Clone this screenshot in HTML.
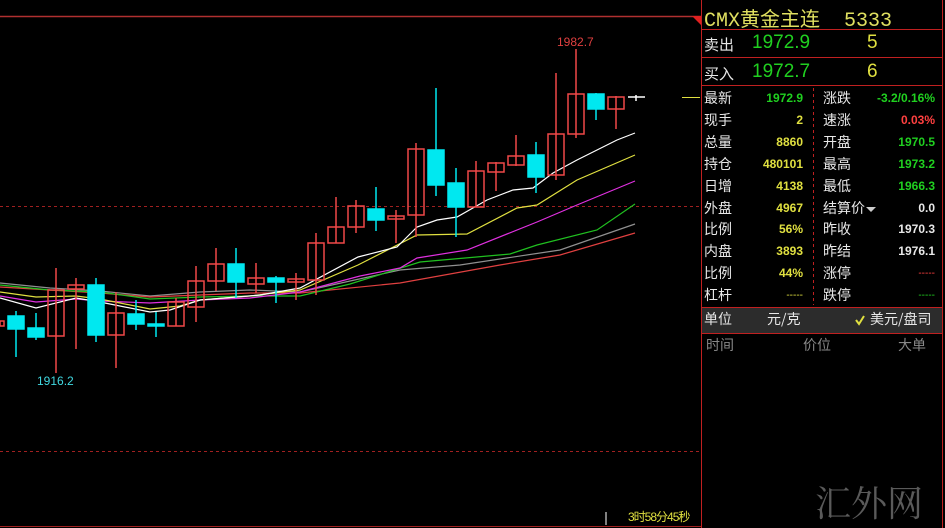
<!DOCTYPE html>
<html><head><meta charset="utf-8"><style>
body{margin:0;background:#000;width:945px;height:528px;overflow:hidden;position:relative;font-family:"Liberation Sans","Noto Sans CJK SC",sans-serif}
.a{position:absolute;white-space:nowrap}
.l{color:#e8e8e8;font-size:14px;font-family:"Noto Sans CJK SC",sans-serif;line-height:21.9px}
.n{font-weight:bold;font-size:12px;text-align:right;line-height:21.9px}
.y{color:#e0e040}.g{color:#20d020}.r{color:#ff4040}.w{color:#e8e8e8}
</style></head><body>
<svg class="a" style="left:0;top:0" width="945" height="528">
<line x1="0" y1="16.5" x2="701" y2="16.5" stroke="#b03030" stroke-width="1.5"/>
<polygon points="692,16 701,16 701,25" fill="#e02020"/>
<line x1="0" y1="206.5" x2="700" y2="206.5" stroke="#a02020" stroke-dasharray="3,3"/>
<line x1="0" y1="451.5" x2="700" y2="451.5" stroke="#a02020" stroke-dasharray="3,3"/>
<line x1="701.5" y1="0" x2="701.5" y2="528" stroke="#c02020"/>
<line x1="942.5" y1="0" x2="942.5" y2="528" stroke="#c02020"/>
<line x1="0" y1="526.5" x2="701" y2="526.5" stroke="#a02020"/>
<line x1="701" y1="29.5" x2="942" y2="29.5" stroke="#c02020"/>
<line x1="701" y1="57.5" x2="942" y2="57.5" stroke="#c02020"/>
<line x1="701" y1="85.5" x2="942" y2="85.5" stroke="#c02020"/>
<line x1="813.5" y1="88" x2="813.5" y2="305" stroke="#c02020" stroke-dasharray="3,3"/>
<rect x="702" y="307" width="240" height="26" fill="#2c2c2c"/>
<line x1="701" y1="307.5" x2="942" y2="307.5" stroke="#c02020"/>
<line x1="701" y1="333.5" x2="942" y2="333.5" stroke="#c02020"/>
<line x1="682" y1="97.5" x2="700" y2="97.5" stroke="#e0e040"/>
<g fill="none" stroke-width="1.2">
<polyline stroke="#909090" points="0,283 50,288 100,291 150,296 200,292 250,290 300,292 400,270 460,265 560,250 635,224"/>
<polyline stroke="#e04040" points="0,287 50,290 100,293 150,297 200,295 250,293 300,293 400,283 500,265 560,255 635,233"/>
<polyline stroke="#20c020" points="0,285 50,290 100,292 150,299 200,297 250,296 300,296 350,284 420,262 510,254 537,245 597,230 635,204"/>
<polyline stroke="#e030e0" points="0,296 36,302 76,299 100,301 150,303 200,300 250,298 300,292 360,276 400,268 417,258 467,250 537,222 577,205 635,181"/>
<polyline stroke="#e0e040" points="0,292 36,297 76,296 100,299 150,309 180,306 200,300 250,296 300,290 358,265 417,235 467,234 517,208 537,205 577,180 635,155"/>
<polyline stroke="#ffffff" points="0,298 36,308 76,298 100,302 150,312 170,310 200,300 260,295 300,288 358,257 397,247 417,227 437,220 457,217 487,200 513,190 533,188 553,173 577,160 617,140 635,133"/>
</g>
<g stroke-width="1.5">
<g stroke="#f04848" fill="none">
<line x1="56" y1="268" x2="56" y2="373"/><rect x="48" y="290" width="16" height="46"/>
<line x1="76" y1="278" x2="76" y2="349"/><rect x="68" y="285" width="16" height="4"/>
<line x1="116" y1="292" x2="116" y2="368"/><rect x="108" y="313" width="16" height="22"/>
<line x1="176" y1="298" x2="176" y2="326"/><rect x="168" y="302" width="16" height="24"/>
<line x1="196" y1="266" x2="196" y2="322"/><rect x="188" y="281" width="16" height="26"/>
<line x1="216" y1="248" x2="216" y2="291"/><rect x="208" y="264" width="16" height="17"/>
<line x1="256" y1="263" x2="256" y2="293"/><rect x="248" y="278" width="16" height="6"/>
<line x1="296" y1="273" x2="296" y2="300"/><rect x="288" y="279" width="16" height="3"/>
<line x1="316" y1="233" x2="316" y2="295"/><rect x="308" y="243" width="16" height="37"/>
<line x1="336" y1="197" x2="336" y2="243"/><rect x="328" y="227" width="16" height="16"/>
<line x1="356" y1="200" x2="356" y2="233"/><rect x="348" y="206" width="16" height="21"/>
<line x1="396" y1="210" x2="396" y2="243"/><rect x="388" y="216" width="16" height="3"/>
<line x1="416" y1="143" x2="416" y2="237"/><rect x="408" y="149" width="16" height="66"/>
<line x1="476" y1="161" x2="476" y2="207"/><rect x="468" y="171" width="16" height="36"/>
<line x1="496" y1="162" x2="496" y2="191"/><rect x="488" y="163" width="16" height="9"/>
<line x1="516" y1="135" x2="516" y2="166"/><rect x="508" y="156" width="16" height="9"/>
<line x1="556" y1="73" x2="556" y2="180"/><rect x="548" y="134" width="16" height="41"/>
<line x1="576" y1="49" x2="576" y2="138"/><rect x="568" y="94" width="16" height="40"/>
<line x1="616" y1="96" x2="616" y2="129"/><rect x="608" y="97" width="16" height="12"/>
<rect x="0" y="321" width="4" height="5"/>
</g>
<g stroke="#00e8f0" fill="#00e8f0">
<line x1="16" y1="311" x2="16" y2="357"/><rect x="8" y="316" width="16" height="13"/>
<line x1="36" y1="313" x2="36" y2="340"/><rect x="28" y="328" width="16" height="9"/>
<line x1="96" y1="278" x2="96" y2="342"/><rect x="88" y="285" width="16" height="50"/>
<line x1="136" y1="300" x2="136" y2="330"/><rect x="128" y="314" width="16" height="10"/>
<line x1="156" y1="312" x2="156" y2="337"/><rect x="148" y="324" width="16" height="2"/>
<line x1="236" y1="248" x2="236" y2="298"/><rect x="228" y="264" width="16" height="18"/>
<line x1="276" y1="276" x2="276" y2="303"/><rect x="268" y="278" width="16" height="4"/>
<line x1="376" y1="187" x2="376" y2="231"/><rect x="368" y="209" width="16" height="11"/>
<line x1="436" y1="88" x2="436" y2="196"/><rect x="428" y="150" width="16" height="35"/>
<line x1="456" y1="168" x2="456" y2="237"/><rect x="448" y="183" width="16" height="24"/>
<line x1="536" y1="142" x2="536" y2="193"/><rect x="528" y="155" width="16" height="22"/>
<line x1="596" y1="93" x2="596" y2="120"/><rect x="588" y="94" width="16" height="15"/>
</g>
<g stroke="#fff"><line x1="628" y1="97" x2="645" y2="97"/><line x1="636" y1="95" x2="636" y2="101"/><line x1="606" y1="512" x2="606" y2="525" stroke-width="1"/></g>
</g>
<text x="557" y="46" fill="#e04040" font-size="12" font-family="Liberation Sans">1982.7</text>
<text x="37" y="385" fill="#40d8e0" font-size="12" font-family="Liberation Sans">1916.2</text>
<polyline points="856,320 859,324 864,316" fill="none" stroke="#e0e040" stroke-width="2"/>
<polygon points="866,207 876,207 871,212" fill="#ccc"/>
</svg>
<div class="a" style="left:704px;top:3px;font-size:20px;color:#e0e060;font-family:'Liberation Mono','Noto Sans CJK SC',monospace">CMX黄金主连&nbsp;&nbsp;5333</div>
<div class="a l" style="left:704px;top:34px;font-size:15px">卖出</div>
<div class="a g" style="left:752px;top:32px;font-size:19px">1972.9</div>
<div class="a y" style="left:867px;top:32px;font-size:19px">5</div>
<div class="a l" style="left:704px;top:63px;font-size:15px">买入</div>
<div class="a g" style="left:752px;top:61px;font-size:19px">1972.7</div>
<div class="a y" style="left:867px;top:61px;font-size:19px">6</div>

<div class="a l" style="left:704px;top:88px">最新<br>现手<br>总量<br>持仓<br>日增<br>外盘<br>比例<br>内盘<br>比例<br>杠杆</div>
<div class="a l" style="left:823px;top:88px">涨跌<br>速涨<br>开盘<br>最高<br>最低<br>结算价<br>昨收<br>昨结<br>涨停<br>跌停</div>
<div class="a n" style="right:142px;top:88px;width:80px">
<div class="g">1972.9</div><div class="y">2</div><div class="y">8860</div><div class="y">480101</div><div class="y">4138</div><div class="y">4967</div><div class="y">56%</div><div class="y">3893</div><div class="y">44%</div><div class="y" style="font-weight:normal;font-size:10px">-----</div></div>
<div class="a n" style="right:10px;top:88px;width:100px">
<div class="g">-3.2/0.16%</div><div class="r">0.03%</div><div class="g">1970.5</div><div class="g">1973.2</div><div class="g">1966.3</div><div class="w">0.0</div><div class="w">1970.3</div><div class="w">1976.1</div><div class="r" style="font-weight:normal;font-size:10px">-----</div><div class="g" style="font-weight:normal;font-size:10px">-----</div></div>
<div class="a l" style="left:704px;top:309px">单位</div>
<div class="a l" style="left:767px;top:309px">元/克</div>
<div class="a l" style="left:870px;top:309px">美元/盘司</div>
<div class="a l" style="left:706px;top:335px;color:#888">时间</div>
<div class="a l" style="left:803px;top:335px;color:#888">价位</div>
<div class="a l" style="left:898px;top:335px;color:#888">大单</div>
<div class="a" style="left:628px;top:508px;font-size:12px;color:#e0e040;font-family:'Liberation Sans','Noto Sans CJK SC',sans-serif;letter-spacing:-1px">3时58分45秒</div>
<div class="a" style="left:815px;top:476px;font-size:36px;color:#5a5a5a;font-family:'Noto Serif CJK SC',serif">汇外网</div>
</body></html>
